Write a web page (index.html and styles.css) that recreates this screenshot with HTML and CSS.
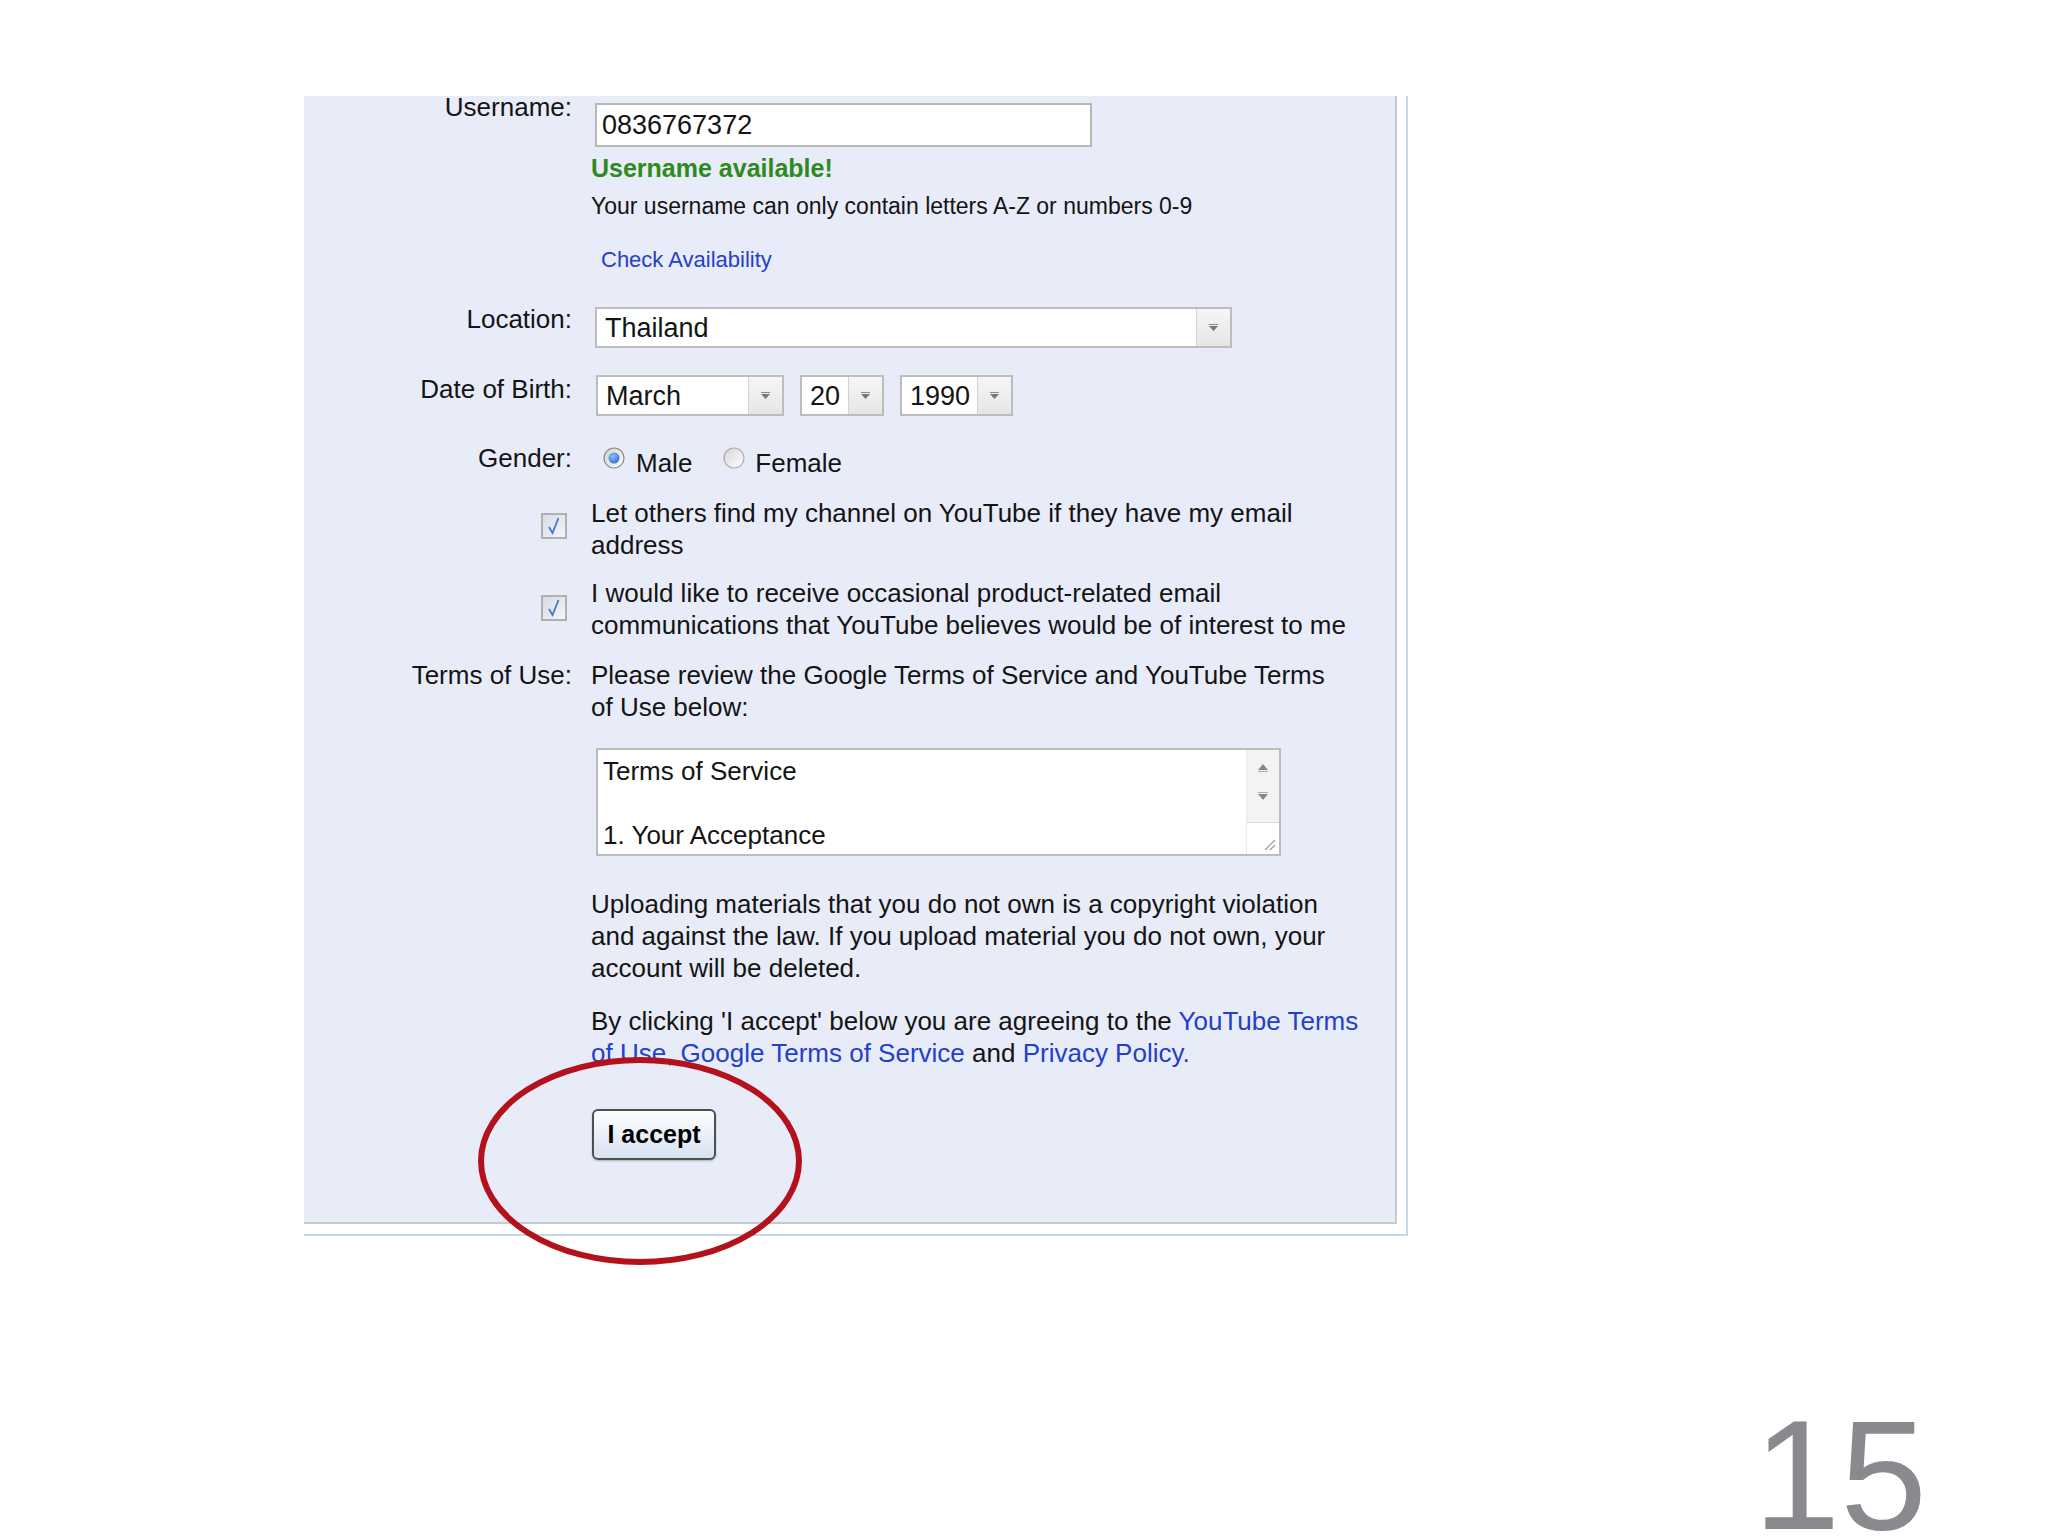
FILE: index.html
```
<!DOCTYPE html>
<html>
<head>
    <meta charset="utf-8">
    <title>YouTube Sign Up</title>
    <link rel="stylesheet" href="styles.css">
</head>
<body>
<div class="slide">
    <div class="frame">
        <div class="panel">
            <div class="row row-user">
                <div class="label">Username:</div>
                <div class="field">
                    <div class="textbox">0836767372</div>
                    <div class="ok">Username available!</div>
                    <div class="hint">Your username can only contain letters A-Z or numbers 0-9</div>
                    <div class="check"><a href="#">Check Availability</a></div>
                </div>
            </div>

            <div class="row row-location">
                <div class="label">Location:</div>
                <div class="field">
                    <div class="select select-location">
                        <span class="value">Thailand</span>
                        <span class="arrow"><svg width="11" height="8" viewBox="0 0 11 8"><path d="M1 0.5h9" stroke="#8a8a8a" stroke-width="1"/><path d="M1 2h9l-4.5 5z" fill="#777"/></svg></span>
                    </div>
                </div>
            </div>

            <div class="row row-dob">
                <div class="label">Date of Birth:</div>
                <div class="field dob">
                    <div class="select select-month">
                        <span class="value">March</span>
                        <span class="arrow"><svg width="11" height="8" viewBox="0 0 11 8"><path d="M1 0.5h9" stroke="#8a8a8a" stroke-width="1"/><path d="M1 2h9l-4.5 5z" fill="#777"/></svg></span>
                    </div>
                    <div class="select select-day">
                        <span class="value">20</span>
                        <span class="arrow"><svg width="11" height="8" viewBox="0 0 11 8"><path d="M1 0.5h9" stroke="#8a8a8a" stroke-width="1"/><path d="M1 2h9l-4.5 5z" fill="#777"/></svg></span>
                    </div>
                    <div class="select select-year">
                        <span class="value">1990</span>
                        <span class="arrow"><svg width="11" height="8" viewBox="0 0 11 8"><path d="M1 0.5h9" stroke="#8a8a8a" stroke-width="1"/><path d="M1 2h9l-4.5 5z" fill="#777"/></svg></span>
                    </div>
                </div>
            </div>

            <div class="row row-gender">
                <div class="label">Gender:</div>
                <div class="field radios">
                    <svg class="radio" width="22" height="22" viewBox="0 0 22 22">
                        <defs>
                            <linearGradient id="rg1" x1="0" y1="0" x2="1" y2="1">
                                <stop offset="0" stop-color="#cfcfcf"/>
                                <stop offset="1" stop-color="#ffffff"/>
                            </linearGradient>
                            <radialGradient id="dot" cx="0.4" cy="0.35" r="0.7">
                                <stop offset="0" stop-color="#8fc0ff"/>
                                <stop offset="1" stop-color="#2a6fd8"/>
                            </radialGradient>
                        </defs>
                        <circle cx="11" cy="11" r="10" fill="url(#rg1)" stroke="#888" stroke-width="1.2"/>
                        <circle cx="11" cy="11" r="5.5" fill="url(#dot)"/>
                    </svg>
                    <span class="opt">Male</span>
                    <svg class="radio radio-off" width="22" height="22" viewBox="0 0 22 22">
                        <defs>
                            <linearGradient id="rg2" x1="0" y1="0" x2="1" y2="1">
                                <stop offset="0" stop-color="#d6d6d6"/>
                                <stop offset="1" stop-color="#ffffff"/>
                            </linearGradient>
                        </defs>
                        <circle cx="11" cy="11" r="10" fill="url(#rg2)" stroke="#aaa" stroke-width="1.2"/>
                    </svg>
                    <span class="opt opt-female">Female</span>
                </div>
            </div>

            <div class="row row-cb1">
                <div class="label cb-cell">
                    <span class="cb"><svg width="22" height="22" viewBox="0 0 22 22"><path d="M6 12l3.5 6 6-15" fill="none" stroke="#4d72d6" stroke-width="1.8"/></svg></span>
                </div>
                <div class="field text">Let others find my channel on YouTube if they have my email<br>address</div>
            </div>

            <div class="row row-cb2">
                <div class="label cb-cell">
                    <span class="cb"><svg width="22" height="22" viewBox="0 0 22 22"><path d="M6 12l3.5 6 6-15" fill="none" stroke="#4d72d6" stroke-width="1.8"/></svg></span>
                </div>
                <div class="field text">I would like to receive occasional product-related email<br>communications that YouTube believes would be of interest to me</div>
            </div>

            <div class="row row-terms">
                <div class="label">Terms of Use:</div>
                <div class="field">
                    <div class="text">Please review the Google Terms of Service and YouTube Terms<br>of Use below:</div>
                    <div class="textarea">
                        <div class="ta-text">Terms of Service<br><br>1. Your Acceptance</div>
                        <div class="scroll">
                            <div class="track">
                                <svg width="12" height="9" viewBox="0 0 12 9"><path d="M1 7h10l-5-6z" fill="#888"/><path d="M1 8.5h10" stroke="#aaa" stroke-width="1"/></svg>
                                <svg width="12" height="9" viewBox="0 0 12 9"><path d="M1 0.5h10" stroke="#aaa" stroke-width="1"/><path d="M1 2h10l-5 6z" fill="#888"/></svg>
                            </div>
                            <div class="grip">
                                <svg width="14" height="14" viewBox="0 0 14 14"><path d="M13 3L3 13M13 8L8 13" stroke="#999" stroke-width="1.2"/></svg>
                            </div>
                        </div>
                    </div>
                </div>
            </div>

            <div class="row row-upload">
                <div class="label"></div>
                <div class="field text">Uploading materials that you do not own is a copyright violation<br>and against the law. If you upload material you do not own, your<br>account will be deleted.</div>
            </div>

            <div class="row row-agree">
                <div class="label"></div>
                <div class="field text">By clicking 'I accept' below you are agreeing to the <a href="#">YouTube Terms<br>of Use,</a> <a href="#">Google Terms of Service</a> and <a href="#">Privacy Policy.</a></div>
            </div>

            <div class="row row-button">
                <div class="label"></div>
                <div class="field">
                    <button class="accept">I accept</button>
                </div>
            </div>
        </div>
    </div>

    <div class="page-num">15</div>

    <svg class="mark" width="340" height="230" viewBox="0 0 340 230">
        <ellipse cx="170" cy="111" rx="159" ry="101" fill="none" stroke="#b3111c" stroke-width="6"/>
    </svg>
</div>
</body>
</html>
```

FILE: styles.css
```
body {
    margin: 0;
    background-color: #fff;
    font-family: "Liberation Sans", Arial, sans-serif;
    color: #141414;
}

.slide {
    position: relative;
    width: 2048px;
    height: 1536px;
    padding-top: 96px;
    box-sizing: border-box;
    overflow: hidden;
    display: flex;
    flex-direction: column;
}

.frame {
    margin-left: 304px;
    width: 1093px;
    padding-right: 9px;
    padding-bottom: 10px;
    border-right: 2px solid #c6d6ee;
    border-bottom: 2px solid #c6d6ee;
}

.panel {
    background-color: #e8ecf8;
    border-right: 2px solid #c9c9c9;
    border-bottom: 2px solid #c9c9c9;
    padding-bottom: 62px;
    overflow: hidden;
}

.row {
    display: grid;
    grid-template-columns: 268px 780px;
    column-gap: 19px;
}

.label {
    text-align: right;
    font-size: 26px;
    line-height: 32px;
    white-space: nowrap;
}

.text {
    font-size: 26px;
    line-height: 32px;
    white-space: nowrap;
}

a {
    color: #2340c8;
    text-decoration: none;
}

/* username */
.row-user .label {
    line-height: 22px;
}

.textbox {
    margin-top: 7px;
    margin-left: 4px;
    width: 497px;
    height: 44px;
    box-sizing: border-box;
    border: 2px solid #b7b7b7;
    background-color: #fff;
    padding-left: 5px;
    font-size: 27px;
    line-height: 40px;
}

.ok {
    margin-top: 5px;
    font-size: 25px;
    line-height: 32px;
    font-weight: bold;
    color: #2e8a1e;
}

.hint {
    margin-top: 6px;
    font-size: 23px;
    line-height: 32px;
    white-space: nowrap;
}

.check {
    margin-top: 22px;
    margin-left: 10px;
    font-size: 22px;
    line-height: 32px;
}

/* selects */
.select {
    display: flex;
    height: 41px;
    box-sizing: border-box;
    border: 2px solid #bdbdbd;
    background-color: #fff;
}

.select .value {
    flex: 1;
    padding-left: 8px;
    font-size: 27px;
    line-height: 38px;
}

.select .arrow {
    width: 33px;
    border-left: 1px solid #d2d2d2;
    background: linear-gradient(#f6f6f6, #e6e6e6);
    display: flex;
    align-items: center;
    justify-content: center;
}

.row-location {
    margin-top: 27px;
}

.select-location {
    margin-top: 4px;
    margin-left: 4px;
    width: 637px;
}

.row-dob {
    margin-top: 25px;
}

.dob {
    display: flex;
    gap: 16px;
    margin-top: 2px;
    margin-left: 5px;
}

.select-month {
    width: 188px;
}

.select-day {
    width: 84px;
}

.select-year {
    width: 113px;
}

/* gender */
.row-gender {
    margin-top: 26px;
}

.radios {
    display: flex;
    align-items: flex-start;
    margin-top: 5px;
    margin-left: 12px;
}

.opt {
    margin-left: 11px;
    font-size: 26px;
    line-height: 32px;
}

.radio-off {
    margin-left: 31px;
}

.opt-female {
    margin-left: 10px;
}

/* checkboxes */
.cb-cell {
    display: flex;
    justify-content: flex-end;
}

.cb {
    width: 26px;
    height: 26px;
    box-sizing: border-box;
    margin-right: 5px;
    border: 2px solid #b0b0b0;
    background: linear-gradient(135deg, #d7dbe4, #f4f5f8);
    display: flex;
}

.row-cb1 {
    margin-top: 18px;
}

.row-cb1 .cb {
    margin-top: 16px;
}

.row-cb2 {
    margin-top: 16px;
}

.row-cb2 .cb {
    margin-top: 18px;
}

/* terms */
.row-terms {
    margin-top: 18px;
}

.textarea {
    display: flex;
    margin-top: 25px;
    margin-left: 5px;
    width: 685px;
    height: 108px;
    box-sizing: border-box;
    border: 2px solid #bcbcbc;
    background-color: #fff;
}

.ta-text {
    flex: 1;
    padding: 5px 0 0 5px;
    font-size: 26px;
    line-height: 32px;
}

.scroll {
    width: 32px;
    display: flex;
    flex-direction: column;
    border-left: 1px solid #ececec;
}

.track {
    height: 72px;
    background-color: #f3f3f3;
    display: flex;
    flex-direction: column;
    align-items: center;
    padding-top: 13px;
    gap: 20px;
    box-sizing: border-box;
}

.grip {
    flex: 1;
    border-top: 1px solid #dcdcdc;
    display: flex;
    align-items: flex-end;
    justify-content: flex-end;
    padding: 0 3px 3px 0;
}

.row-upload {
    margin-top: 32px;
}

.row-agree {
    margin-top: 21px;
}

.row-button {
    margin-top: 40px;
}

.accept {
    margin-left: 1px;
    width: 124px;
    height: 51px;
    box-sizing: border-box;
    border: 2px solid #4f4f4f;
    border-radius: 6px;
    background: linear-gradient(#fdfeff, #d8e2f2);
    box-shadow: 0 1px 2px rgba(0, 0, 0, 0.25);
    font-family: "Liberation Sans", Arial, sans-serif;
    font-size: 25px;
    font-weight: bold;
    color: #000;
    padding: 0;
}

.page-num {
    margin-top: auto;
    padding-right: 121px;
    text-align: right;
    font-size: 156px;
    line-height: 122px;
    color: #8a898e;
}

.mark {
    position: absolute;
    left: 470px;
    top: 1050px;
}
```
